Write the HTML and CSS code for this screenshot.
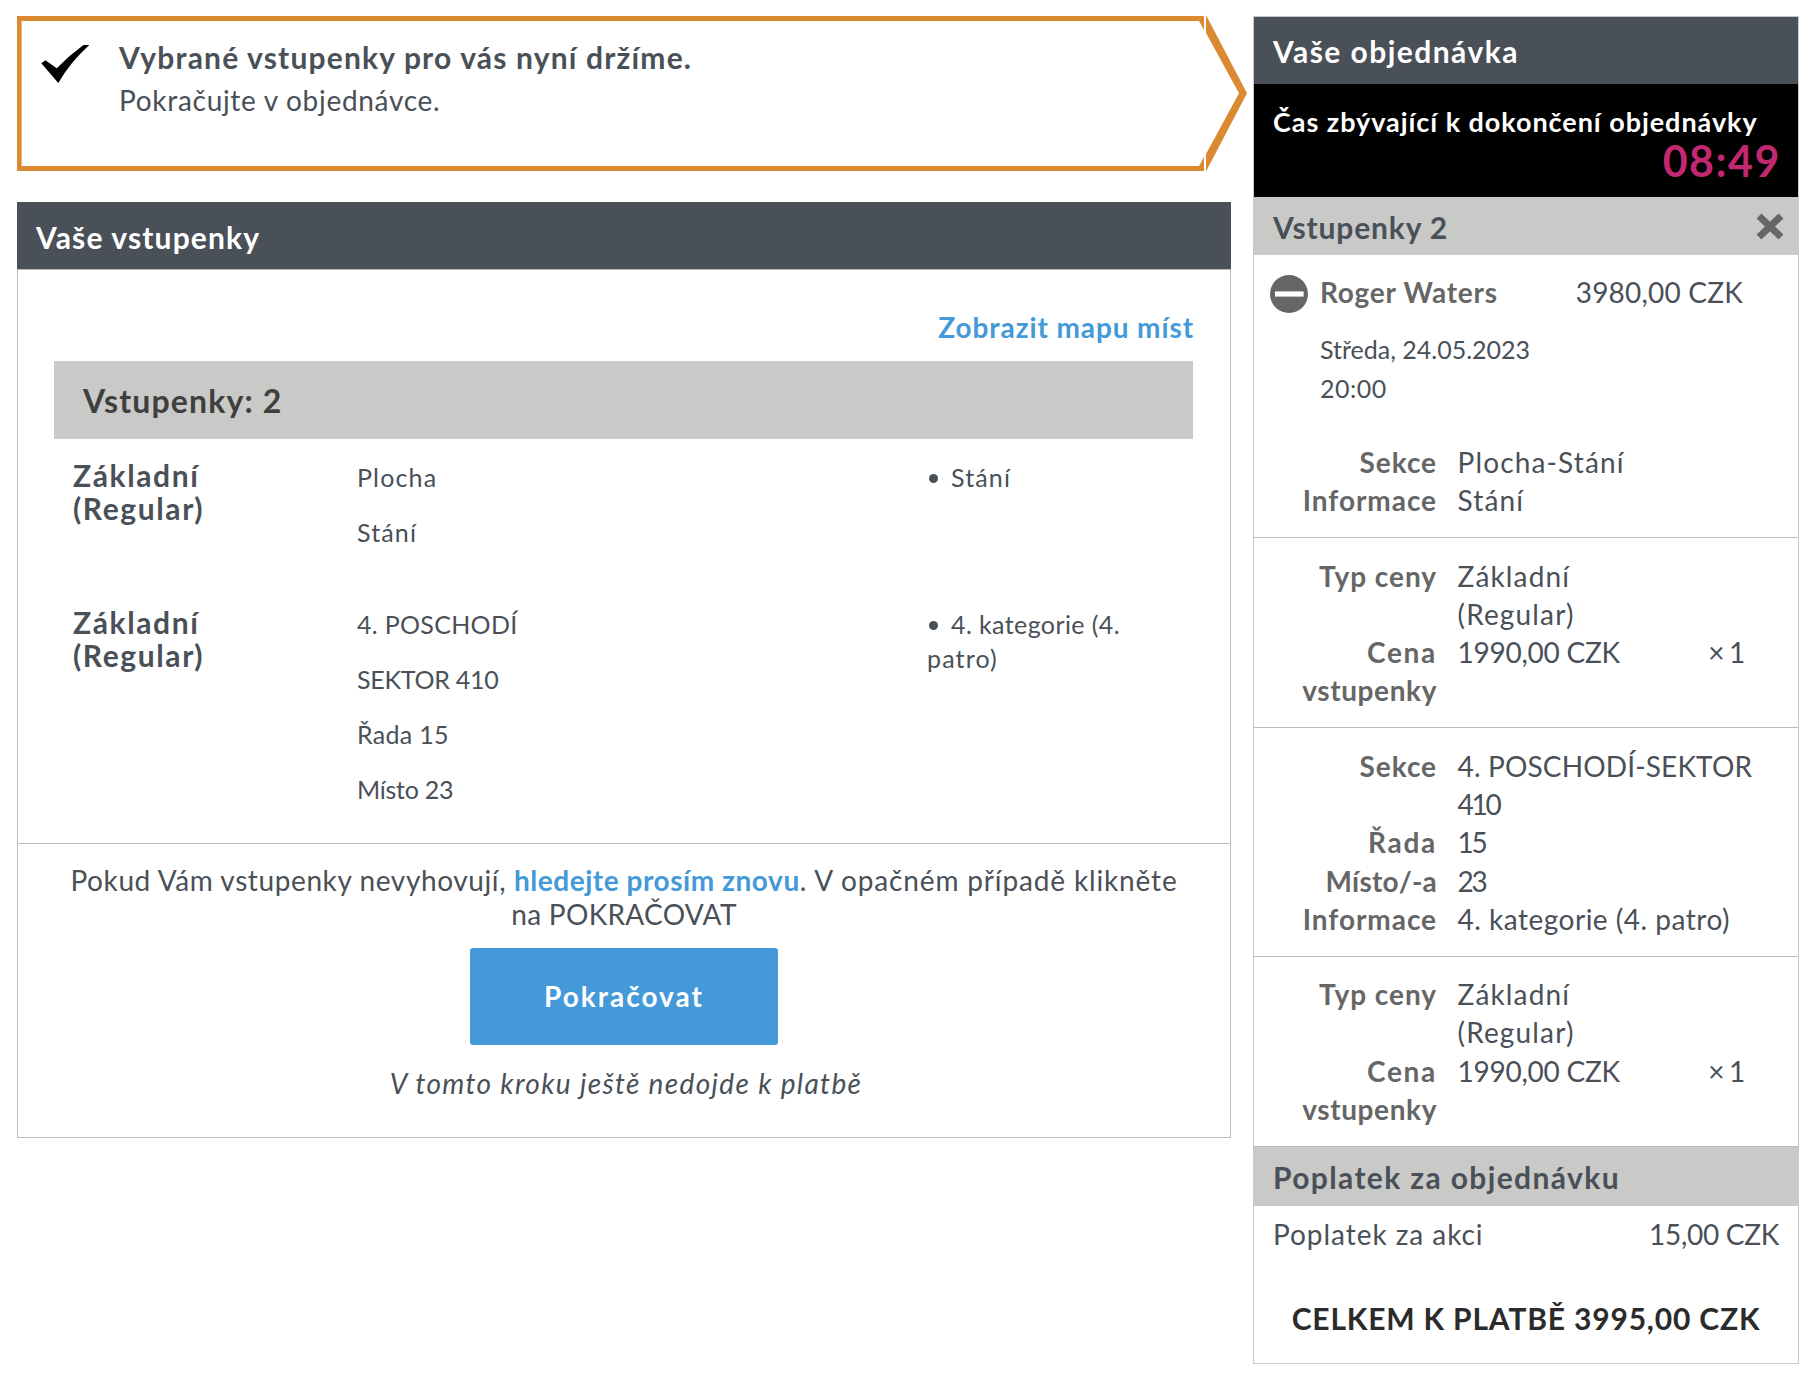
FILE: index.html
```
<!DOCTYPE html>
<html lang="cs">
<head>
<meta charset="utf-8">
<title>Vaše vstupenky</title>
<link rel="stylesheet" href="styles.css">
</head>
<body>
<div class="page">
  <main class="main">
    <section class="notice">
      <svg class="notice-frame" width="1231" height="158" viewBox="0 -1 1231 158" fill="#dc8a31">
        <path fill-rule="evenodd" d="M0 0H1187V155H0ZM4.6 5H1182L1187 14V141L1182 150H4.6Z"/>
        <path d="M1189-1L1230 77.300 1189 155.500V138L1222 77.300 1189 17Z"/>
      </svg>
      <svg class="notice-check" width="50" height="40" viewBox="0 0 50 40">
        <path d="M.3 18.300L4.500 15.300 15.700 23.300Q28 10.500 42.500 0H48.300Q29 17.500 17.300 38Z"/>
      </svg>
      <div class="notice-text">
        <h2 class="notice-title">Vybrané vstupenky pro vás nyní držíme.</h2>
        <p class="notice-sub">Pokračujte v objednávce.</p>
      </div>
    </section>

    <section class="tickets">
      <h2 class="bar">Vaše vstupenky</h2>
      <div class="tickets-body">
        <div class="tickets-list">
          <a class="map-link">Zobrazit mapu míst</a>
          <h3 class="count">Vstupenky: 2</h3>
          <div class="ticket">
            <div class="ticket-type">Základní<br>(Regular)</div>
            <div class="ticket-seat"><span class="wide">Plocha</span><span class="wide">Stání</span></div>
            <div class="ticket-info wide"><i class="dot"></i>Stání</div>
          </div>
          <div class="ticket ticket-last">
            <div class="ticket-type">Základní<br>(Regular)</div>
            <div class="ticket-seat"><span class="snug">4. POSCHODÍ</span><span class="tight">SEKTOR 410</span><span class="snug">Řada 15</span><span class="tight">Místo 23</span></div>
            <div class="ticket-info"><i class="dot"></i>4. kategorie (4.<br><span class="wide">patro)</span></div>
          </div>
        </div>
        <div class="tickets-foot">
          <p class="hint">Pokud Vám vstupenky nevyhovují, <a class="link">hledejte prosím znovu</a><span class="hint-tail">. V opačném případě klikněte</span><br><span class="snug">na POKRAČOVAT</span></p>
          <button class="continue">Pokračovat</button>
          <p class="note">V tomto kroku ještě nedojde k platbě</p>
        </div>
      </div>
    </section>
  </main>

  <aside class="order">
    <h2 class="bar order-bar">Vaše objednávka</h2>
    <div class="timer">
      <div class="timer-label">Čas zbývající k dokončení objednávky</div>
      <div class="timer-value">08:49</div>
    </div>
    <div class="group">
      <h3 class="group-title snug-title">Vstupenky 2</h3>
      <svg class="close" width="28" height="27" viewBox="0 0 28 27"><path d="M3 3L25 24M25 3L3 24" stroke="#666" stroke-width="7"/></svg>
    </div>
    <div class="block">
      <div class="event">
        <svg width="38" height="38" viewBox="0 0 38 38"><circle cx="19" cy="19" r="19" fill="#666"/><path d="M5 16.400h28.600v5.200H5z" fill="#fff"/></svg>
        <b class="event-name">Roger Waters</b>
        <span class="event-price">3980,00 CZK</span>
      </div>
      <div class="date"><span>Středa, 24.05.2023</span><br><span class="date-time">20:00</span></div>
      <div class="row"><b>Sekce</b><span class="wide">Plocha-Stání</span></div>
      <div class="row"><b>Informace</b><span class="wide">Stání</span></div>
    </div>
    <div class="block">
      <div class="row"><b>Typ ceny</b><span class="wide">Základní<br>(Regular)</span></div>
      <div class="row"><b class="two-line"><span class="wider">Cena</span><br>vstupenky</b><span class="tight">1990,00 CZK</span><span class="qty">× 1</span></div>
    </div>
    <div class="block">
      <div class="row"><b>Sekce</b><span class="seat">4. POSCHODÍ-SEKTOR<br><span class="digits">410</span></span></div>
      <div class="row"><b class="wider">Řada</b><span class="digits">15</span></div>
      <div class="row"><b class="tight-label">Místo/-a</b><span class="digits">23</span></div>
      <div class="row"><b>Informace</b><span>4. kategorie (4. patro)</span></div>
    </div>
    <div class="block">
      <div class="row"><b>Typ ceny</b><span class="wide">Základní<br>(Regular)</span></div>
      <div class="row"><b class="two-line"><span class="wider">Cena</span><br>vstupenky</b><span class="tight">1990,00 CZK</span><span class="qty">× 1</span></div>
    </div>
    <div class="group group-fee"><h3 class="group-title">Poplatek za objednávku</h3></div>
    <div class="fee"><span>Poplatek za akci</span><span class="fee-price">15,00 CZK</span></div>
    <div class="total">CELKEM K PLATBĚ 3995,00 CZK</div>
  </aside>
</div>
</body>
</html>
```
FILE: styles.css
```
* { box-sizing: border-box; margin: 0; padding: 0; }
body {
  background: #fff;
  color: #495058;
  font-family: Lato, "Liberation Sans", sans-serif;
  font-size: 28px;
}
b, h2, h3 { font-weight: 700; }
.page {
  display: flex;
  align-items: flex-start;
  gap: 22px;
  padding: 16px 19px 0 17px;
}
.main { width: 1214px; }

.notice {
  position: relative;
  display: flex;
  height: 155px;
  padding: 29px 0 0 24px;
}
.notice-frame { position: absolute; left: 0; top: -1px; }
.notice-check { margin-right: 28px; flex: none; }
.notice-title { margin-top: -6px; font-size: 30px; line-height: 36px; letter-spacing: 1.170px; white-space: nowrap; }
.notice-sub { margin-top: 8px; line-height: 34px; letter-spacing: .7px; }

.tickets { margin-top: 31px; }
.bar {
  height: 67px;
  padding: 16.500px 19px 0;
  background: #495058;
  color: #fff;
  font-size: 30px;
  line-height: 36px;
  letter-spacing: 1.150px;
}
.tickets-body { height: 869px; border: 1px solid #bbb; }
.tickets-list { height: 573px; padding: 40px 37px 0 36px; }
.map-link, .link { color: #4499d8; font-weight: 700; }
.map-link { display: block; margin-right: -1px; text-align: right; line-height: 34px; letter-spacing: .9px; }
.count {
  height: 78px;
  margin-top: 17px;
  padding: 21px 28px 0 29px;
  background: #c9c9c7;
  color: #3f3f3f;
  font-size: 32px;
  line-height: 38px;
  letter-spacing: 1.150px;
}
.ticket {
  display: grid;
  grid-template-columns: 284px 570px 1fr;
  height: 147px;
  padding: 19.500px 0 0 19px;
}
.ticket-last { height: auto; }
.ticket-type { font-size: 30px; font-weight: 700; line-height: 33px; letter-spacing: 1.600px; }
.ticket-seat { display: flex; flex-direction: column; gap: 21px; padding-top: 1px; font-size: 25px; line-height: 34px; }
.ticket-info { padding-top: 1px; font-size: 25px; line-height: 34px; letter-spacing: .4px; white-space: nowrap; }
.dot { display: inline-block; width: 9px; height: 9px; margin: 0 13px 4px 2px; border-radius: 50%; background: #495058; }

.tickets-foot {
  display: flex;
  flex-direction: column;
  align-items: center;
  padding-top: 19px;
  border-top: 1px solid #bbb;
}
.hint { text-align: center; line-height: 34px; letter-spacing: .6px; white-space: nowrap; }
.hint .link { letter-spacing: .55px; }
.hint-tail { letter-spacing: .85px; }
.continue {
  width: 308px;
  height: 97px;
  margin-top: 17px;
  padding-bottom: 1px;
  border: 0;
  border-radius: 3px;
  background: #4499d8;
  color: #fff;
  font: 700 28px/34px Lato, "Liberation Sans", sans-serif;
  letter-spacing: 2px;
}
.note { margin-top: 21px; padding-left: 4px; font-style: italic; line-height: 34px; letter-spacing: 1.350px; }

.order { width: 546px; height: 1348px; border: 1px solid #c9c9c9; }
.order-bar { padding: 15.500px 19px 0; letter-spacing: 1.450px; }
.timer { height: 113px; padding: 21.500px 17px 0 19px; background: #000; }
.timer-label { color: #fff; font-size: 27px; font-weight: 700; line-height: 32px; letter-spacing: .95px; white-space: nowrap; }
.timer-value { padding-top: 1px; color: #c1286f; font-size: 43px; font-weight: 700; line-height: 44px; letter-spacing: 1.500px; text-align: right; }
.group {
  display: flex;
  justify-content: space-between;
  height: 58px;
  padding: 11.500px 14px 0 19px;
  background: #c9c9c7;
}
.group-title { font-size: 30px; line-height: 36px; letter-spacing: 1.370px; }
.snug-title { letter-spacing: .85px; }
.close { margin-top: 4.500px; }
.group-fee { height: 60px; padding-top: 12px; border-top: 1px solid #bbb; }

.block { padding: 18.300px 0 17.800px; line-height: 38.250px; letter-spacing: .5px; }
.block + .block { border-top: 1px solid #bbb; }
.block b { color: #666; }
.event { display: grid; grid-template-columns: 38px 230px 184px; column-gap: 12px; padding: 0 0 0 16px; }
.event svg { margin-top: 2px; }
.event-name { letter-spacing: .75px; }
.event-price { padding-right: 3px; text-align: right; letter-spacing: .2px; margin-left: -10px; }
.date { margin: 17px 0 36.300px 66px; font-size: 25px; letter-spacing: 0; }
.date-time { letter-spacing: .5px; }
.row { display: grid; grid-template-columns: 183px 1fr auto; column-gap: 20.500px; padding-right: 54px; white-space: nowrap; }
.row b { text-align: right; letter-spacing: .95px; }
.row b.two-line { letter-spacing: .6px; }
.row b.wider, .row .wider { letter-spacing: 1.700px; }
.row b.tight-label { letter-spacing: .2px; }
.row .seat { letter-spacing: .15px; margin-right: -30px; }
.row .digits { letter-spacing: -2.200px; }
.wide { letter-spacing: 1.150px; }
.snug { letter-spacing: .3px; }
.tight { letter-spacing: -.25px; }
.row .qty { letter-spacing: -1.300px; }

.fee { display: flex; justify-content: space-between; padding: 9.500px 19px 0; line-height: 38px; letter-spacing: .95px; }
.fee-price { letter-spacing: -.3px; }
.total { margin-top: 47px; color: #2b2b2b; font-size: 30px; font-weight: 700; line-height: 36px; letter-spacing: .82px; text-align: center; }
```
